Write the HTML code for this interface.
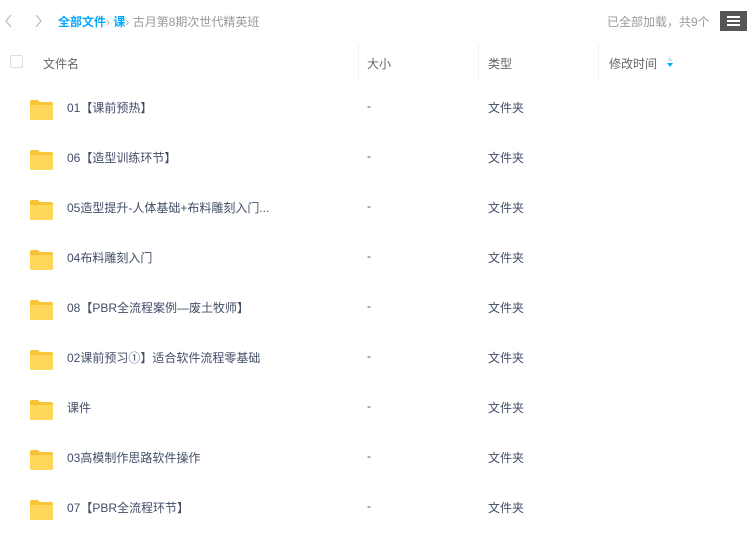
<!DOCTYPE html>
<html><head><meta charset="utf-8">
<style>
*{margin:0;padding:0;box-sizing:border-box}
body{width:747px;height:540px;background:#fff;font-family:"Liberation Sans","Noto Sans CJK SC",sans-serif;font-size:12px;color:#424e67;position:relative;overflow:hidden}
.abs{position:absolute;white-space:nowrap}
.sep{position:absolute;top:44px;width:1px;height:36px;background:#f1f2f4}
.row{position:absolute;left:0;width:747px;height:50px}
.row .n{position:absolute;left:67px;top:15px;font-size:12px;color:#424e67}
.row .s{position:absolute;left:367px;top:15px;color:#424e67}
.row .t{position:absolute;left:488px;top:15px;color:#424e67}
.row svg{position:absolute;left:29px;top:15px}
</style></head><body>
<svg class="abs" style="left:4px;top:14px" width="10" height="14" viewBox="0 0 10 14"><path d="M7 1 L2 7 L7 13" fill="none" stroke="#bbb" stroke-width="1.2"/></svg>
<svg class="abs" style="left:33px;top:14px" width="10" height="14" viewBox="0 0 10 14"><path d="M3 1 L8 7 L3 13" fill="none" stroke="#bbb" stroke-width="1.2"/></svg>
<div class="abs" style="left:58px;top:13px;font-size:12px;color:#06a7ff;font-weight:bold">全部文件<span style="color:#aaa;font-weight:normal">›</span> 课<span style="color:#aaa;font-weight:normal">›</span> <span style="color:#999;font-weight:normal">古月第8期次世代精英班</span></div>
<div class="abs" style="left:607px;top:13px;color:#999">已全部加载，共9个</div>
<div class="abs" style="left:720px;top:11px;width:27px;height:20px;background:#555;"><div style="margin:5px 7px;height:10px;border-top:2px solid #fff;border-bottom:2px solid #fff;position:relative"><div style="position:absolute;top:2px;left:0;right:0;height:2px;background:#fff"></div></div></div>
<div class="sep" style="left:358px"></div><div class="sep" style="left:478px"></div><div class="sep" style="left:598px"></div>
<div class="abs" style="left:10px;top:55px;width:13px;height:13px;border:1px solid #ddd;border-radius:2px"></div>
<div class="abs" style="left:43px;top:55px;color:#666">文件名</div>
<div class="abs" style="left:367px;top:55px;color:#666">大小</div>
<div class="abs" style="left:488px;top:55px;color:#666">类型</div>
<div class="abs" style="left:609px;top:55px;color:#666">修改时间</div>
<svg class="abs" style="left:666px;top:56px" width="8" height="12" viewBox="0 0 8 12"><path d="M4 1 L7 5 H1Z" fill="#cfe4f8"/><path d="M4 11 L7 7 H1Z" fill="#06a7ff"/></svg>
<div id="rows"></div>
<script>
const names=["01【课前预热】","06【造型训练环节】","05造型提升-人体基础+布料雕刻入门...","04布料雕刻入门","08【PBR全流程案例—废土牧师】","02课前预习①】适合软件流程零基础","课件","03高模制作思路软件操作","07【PBR全流程环节】"];
let h="";
names.forEach((n,i)=>{h+=`<div class="row" style="top:${84+i*50}px"><svg width="25" height="22" viewBox="0 0 25 22"><path d="M1 3 Q1 1 3 1 H9 L11 3 H22 Q24 3 24 5 V19 Q24 21 22 21 H3 Q1 21 1 19Z" fill="#f7c437"/><path d="M1 6 H24 V19 Q24 21 22 21 H3 Q1 21 1 19Z" fill="#fdd65a"/></svg><div class="n">${n}</div><div class="s">-</div><div class="t">文件夹</div></div>`});
document.getElementById("rows").innerHTML=h;
</script>
</body></html>
